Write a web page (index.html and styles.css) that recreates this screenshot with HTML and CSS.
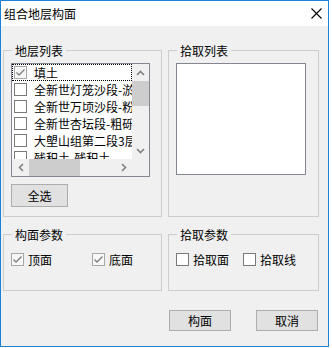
FILE: index.html
```html
<!DOCTYPE html>
<html lang="zh-CN">
<head>
<meta charset="utf-8">
<title>组合地层构面</title>
<link rel="stylesheet" href="styles.css">
</head>
<body>
<div class="window">
  <div class="titlebar">
    <span class="title">组合地层构面</span>
    <svg class="close" width="11" height="11" viewBox="0 0 11 11"><path d="M0.5 0.5 L10.5 10.5 M10.5 0.5 L0.5 10.5" stroke="#000" stroke-width="1.1" fill="none"/></svg>
  </div>
  <div class="client">
    <div class="grid-row">
      <fieldset class="gb">
        <legend>地层列表</legend>
        <div class="gb-body body-list">
          <div class="listbox">
            <div class="lb-items">
              <div class="lb-row focus"><span class="cb checked"><svg width="11" height="11" viewBox="0 0 11 11"><path d="M1.5 5.5 L4 8 L9.5 2.5" stroke="#7d7d7d" stroke-width="1.3" fill="none"/></svg></span><span class="lb-text">填土</span></div>
              <div class="lb-row"><span class="cb"></span><span class="lb-text">全新世灯笼沙段-淤泥</span></div>
              <div class="lb-row"><span class="cb"></span><span class="lb-text">全新世万顷沙段-粉砂</span></div>
              <div class="lb-row"><span class="cb"></span><span class="lb-text">全新世杏坛段-粗砾砂</span></div>
              <div class="lb-row"><span class="cb"></span><span class="lb-text">大塱山组第二段3层</span></div>
              <div class="lb-row"><span class="cb"></span><span class="lb-text">残积土-残积土</span></div>
            </div>
            <div class="vscroll">
              <div class="sb-btn"><svg width="9" height="6" viewBox="0 0 9 6"><path d="M1 5 L4.5 1.5 L8 5" stroke="#808080" stroke-width="1.6" fill="none"/></svg></div>
              <div class="vtrack"><div class="vthumb"></div></div>
              <div class="sb-btn"><svg width="9" height="6" viewBox="0 0 9 6"><path d="M1 1 L4.5 4.5 L8 1" stroke="#808080" stroke-width="1.6" fill="none"/></svg></div>
            </div>
            <div class="hscroll">
              <div class="sb-btn"><svg width="6" height="9" viewBox="0 0 6 9"><path d="M5 1 L1.5 4.5 L5 8" stroke="#808080" stroke-width="1.6" fill="none"/></svg></div>
              <div class="htrack"><div class="hthumb"></div></div>
              <div class="sb-btn"><svg width="6" height="9" viewBox="0 0 6 9"><path d="M1 1 L4.5 4.5 L1 8" stroke="#808080" stroke-width="1.6" fill="none"/></svg></div>
            </div>
            <div class="corner"></div>
          </div>
          <button class="btn btn-all">全选</button>
        </div>
      </fieldset>
      <fieldset class="gb">
        <legend>拾取列表</legend>
        <div class="gb-body body-pick">
          <div class="pickbox"></div>
        </div>
      </fieldset>
    </div>
    <div class="grid-row params">
      <fieldset class="gb">
        <legend>构面参数</legend>
        <div class="gb-body opts opts-left">
          <label class="opt w81"><span class="cb checked"><svg width="11" height="11" viewBox="0 0 11 11"><path d="M1.5 5.5 L4 8 L9.5 2.5" stroke="#7d7d7d" stroke-width="1.3" fill="none"/></svg></span><span>顶面</span></label>
          <label class="opt"><span class="cb checked"><svg width="11" height="11" viewBox="0 0 11 11"><path d="M1.5 5.5 L4 8 L9.5 2.5" stroke="#7d7d7d" stroke-width="1.3" fill="none"/></svg></span><span>底面</span></label>
        </div>
      </fieldset>
      <fieldset class="gb">
        <legend>拾取参数</legend>
        <div class="gb-body opts opts-right">
          <label class="opt w67"><span class="cb"></span><span>拾取面</span></label>
          <label class="opt"><span class="cb"></span><span>拾取线</span></label>
        </div>
      </fieldset>
    </div>
    <div class="footer">
      <button class="btn btn-foot">构面</button>
      <button class="btn btn-foot last">取消</button>
    </div>
  </div>
</div>
</body>
</html>
```

FILE: styles.css
```css
* { box-sizing: border-box; }
html, body {
  margin: 0;
  padding: 0;
  background: #ffffff;
}
body {
  font-family: "Noto Sans CJK SC", "Noto Sans", sans-serif;
  font-size: 12px;
  color: #000;
}
.window {
  width: 329px;
  height: 347px;
  border: 1px solid #1a82d6;
  background: #f0f0f0;
  display: flex;
  flex-direction: column;
}
.titlebar {
  height: 25px;
  background: #ffffff;
  display: flex;
  align-items: center;
  justify-content: space-between;
  padding-left: 3px;
  padding-right: 6px;
  flex: none;
}
.title {
  font-size: 12px;
  line-height: 16px;
}
.close { display: block; }
.client {
  padding: 16px 9px 0 2px;
}
.grid-row {
  display: grid;
  grid-template-columns: 159px 151px;
  column-gap: 6px;
}
.params { margin-top: 9px; }
.gb {
  margin: 0;
  padding: 0;
  border: 1px solid #cdcdcd;
  min-width: 0;
}
.gb legend {
  margin-left: 8px;
  padding: 0 3px;
  font-size: 12px;
  line-height: 17px;
  height: 17px;
}
.body-list {
  padding: 4px 0 9px 7px;
}
.body-pick {
  padding: 4px 0 0 7px;
}
.listbox {
  width: 139px;
  height: 114px;
  border: 1px solid #828790;
  background: #fff;
  display: grid;
  grid-template-columns: 120px 17px;
  grid-template-rows: 95px 17px;
}
.lb-items {
  overflow: hidden;
  white-space: nowrap;
}
.lb-row {
  height: 17px;
  display: flex;
  align-items: center;
  padding-left: 2px;
  gap: 7px;
}
.lb-row.focus {
  outline: 1px dotted #000;
  outline-offset: -1px;
}
.lb-text {
  line-height: 17px;
}
.cb {
  width: 13px;
  height: 13px;
  border: 1px solid #7a7a7a;
  background: #fff;
  flex: none;
  display: flex;
  align-items: center;
  justify-content: center;
}
.cb.checked {
  border-color: #a8a8a8;
  background: #f7f7f7;
}
.cb svg { display: block; }
.vscroll {
  background: #f0f0f0;
  display: flex;
  flex-direction: column;
}
.hscroll {
  background: #f0f0f0;
  display: flex;
}
.sb-btn {
  width: 17px;
  height: 17px;
  flex: none;
  display: flex;
  align-items: center;
  justify-content: center;
}
.sb-btn svg { display: block; }
.vtrack { flex: 1; }
.vthumb {
  height: 25px;
  background: #cdcdcd;
}
.htrack { flex: 1; display: flex; }
.hthumb {
  width: 51px;
  margin-left: 0;
  background: #cdcdcd;
}
.corner { background: #f0f0f0; }
.btn {
  font-family: "Noto Sans CJK SC", "Noto Sans", sans-serif;
  font-size: 12px;
  color: #000;
  background: #e1e1e1;
  border: 1px solid #adadad;
  padding: 0;
  margin: 0;
  display: flex;
  align-items: center;
  justify-content: center;
}
.btn-all {
  margin-top: 7px;
  width: 57px;
  height: 23px;
}
.pickbox {
  width: 130px;
  height: 112px;
  border: 1px solid #828790;
  background: #fff;
}
.opts {
  display: flex;
  align-items: center;
  padding-top: 10px;
  padding-bottom: 24px;
}
.opts-left { padding-left: 7px; }
.opts-right { padding-left: 7px; }
.opt {
  display: flex;
  align-items: center;
  gap: 4px;
  height: 13px;
  line-height: 13px;
}
.w81 { width: 81px; }
.w67 { width: 67px; }
.footer {
  display: flex;
  justify-content: flex-end;
  gap: 25px;
  margin-top: 19px;
  padding-right: 1px;
}
.btn-foot {
  width: 62px;
  height: 21px;
}
```
